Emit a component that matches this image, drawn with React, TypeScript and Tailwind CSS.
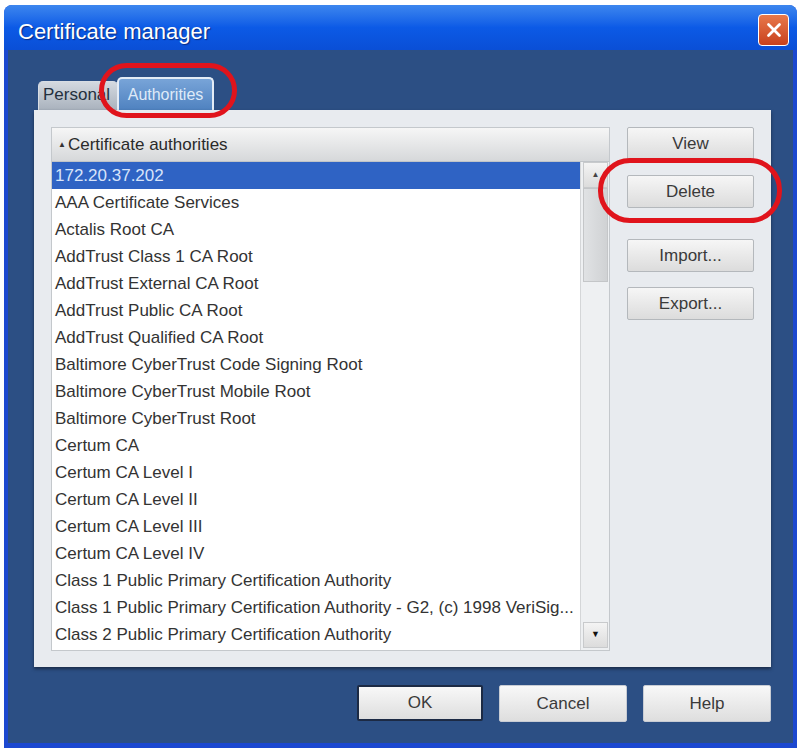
import { X } from "lucide-react";

const rows = [
  "172.20.37.202",
  "AAA Certificate Services",
  "Actalis Root CA",
  "AddTrust Class 1 CA Root",
  "AddTrust External CA Root",
  "AddTrust Public CA Root",
  "AddTrust Qualified CA Root",
  "Baltimore CyberTrust Code Signing Root",
  "Baltimore CyberTrust Mobile Root",
  "Baltimore CyberTrust Root",
  "Certum CA",
  "Certum CA Level I",
  "Certum CA Level II",
  "Certum CA Level III",
  "Certum CA Level IV",
  "Class 1 Public Primary Certification Authority",
  "Class 1 Public Primary Certification Authority - G2, (c) 1998 VeriSig...",
  "Class 2 Public Primary Certification Authority",
];

function SideButton({ label }: { label: string }) {
  return (
    <button className="h-[33px] w-[127px] shrink-0 rounded-[2px] border border-[#b4b8bc] bg-gradient-to-b from-[#f6f6f6] to-[#dcdcdc] text-[17px] text-[#3a3a3a]">
      {label}
    </button>
  );
}

function FooterButton({ label, main }: { label: string; main?: boolean }) {
  return (
    <button
      className={
        main
          ? "h-[36px] w-[126px] rounded-[2px] border-2 border-[#1c2a44] bg-gradient-to-b from-[#f8f8f8] to-[#dedede] text-[17px] text-[#3a3a3a]"
          : "h-[37px] w-[128px] rounded-[2px] border border-[#c8ccd4] bg-gradient-to-b from-[#f8f8f8] to-[#dedede] text-[17px] text-[#3a3a3a]"
      }
    >
      {label}
    </button>
  );
}

export default function App() {
  return (
    <div
      className="relative h-[751px] w-[801px] overflow-hidden bg-white pl-[4px] pt-[5px]"
      style={{ fontFamily: '"Liberation Sans", Arial, sans-serif' }}
    >
      <div className="flex h-[743px] w-[793px] flex-col overflow-hidden rounded-t-[8px] bg-[#1c48d0]">
        {/* title bar */}
        <div className="flex h-[45px] items-center justify-between bg-gradient-to-b from-[#3d86ee] via-[#0c5ae6] to-[#0a4fd6] pl-[14px] pr-[8px]">
          <span className="mt-[7px] text-[22px] text-white [text-shadow:1px_1px_1px_#0a2a80]">Certificate manager</span>
          <div className="mt-[4px] flex h-[32px] w-[31px] items-center justify-center rounded-[4px] border border-white bg-gradient-to-b from-[#e8784a] to-[#c8401c]">
            <X className="h-[22px] w-[22px] text-white" strokeWidth={3} />
          </div>
        </div>

        {/* body */}
        <div className="mx-[4px] mb-[5px] flex flex-1 flex-col bg-[#2c4f84] pl-[26px] pr-[22px]">
          <div className="flex h-[60px] items-end pl-[4px]">
            <div className="flex h-[29px] w-[80px] items-end overflow-hidden rounded-t-[5px] border border-b-0 border-[#d8dde4] bg-gradient-to-b from-[#d4d9e0] to-[#a9b2bd] pb-[3px] pl-[4px] text-[17px] text-[#24303e]">
              <span className="whitespace-nowrap">Personal</span>
            </div>
            <div className="ml-[-1px] flex h-[33px] w-[97px] items-center justify-center rounded-t-[5px] border-2 border-b-0 border-[#e4ecf6] bg-gradient-to-b from-[#78a4d8] to-[#4f82c0] text-[16px] text-[#dfeaf8]">
              Authorities
            </div>
          </div>

          <div className="flex h-[557px] gap-[17px] bg-[#e8ebef] pb-[16px] pl-[17px] pr-[17px] pt-[17px] shadow-[0_2px_3px_#1a2c48]">
            {/* list */}
            <div className="flex w-[559px] shrink-0 flex-col border border-[#c4c8cc] bg-white">
              <div className="flex h-[34px] items-center border-b border-[#c0c4c8] bg-gradient-to-b from-[#f6f6f6] to-[#d6d8da] pl-[6px] text-[17px] text-[#2a2a2a]">
                <span className="mr-[2px] text-[8px] text-[#333]">▲</span>
                Certificate authorities
              </div>
              <div className="flex flex-1">
                <div className="flex flex-1 flex-col overflow-hidden">
                  {rows.map((r, i) => (
                    <div
                      key={r}
                      className={
                        i === 0
                          ? "flex h-[27px] shrink-0 items-center whitespace-nowrap bg-[#2f63c4] pl-[3px] text-[17px] text-[#d8e4fa]"
                          : "flex h-[27px] shrink-0 items-center whitespace-nowrap pl-[3px] text-[17px] text-[#333]"
                      }
                    >
                      {r}
                    </div>
                  ))}
                </div>
                {/* scrollbar */}
                <div className="flex w-[29px] flex-col border-l border-[#d4d6d8] bg-[#eef0f2] pb-[2px] pl-[2px] pr-[1px]">
                  <div className="flex h-[26px] items-center justify-center border border-[#c8cacc] bg-gradient-to-b from-[#f4f4f4] to-[#dcdcdc] text-[8px] text-[#444]">
                    ▲
                  </div>
                  <div className="h-[94px] border border-[#c4c6c8] bg-gradient-to-r from-[#e0e2e4] to-[#d0d2d4]" />
                  <div className="flex-1" />
                  <div className="flex h-[26px] items-center justify-center border border-[#c8cacc] bg-gradient-to-b from-[#f4f4f4] to-[#dcdcdc] text-[9px] text-[#111]">
                    ▼
                  </div>
                </div>
              </div>
            </div>

            {/* side buttons */}
            <div className="flex flex-col">
              <SideButton label="View" />
              <div className="mt-[15px]">
                <SideButton label="Delete" />
              </div>
              <div className="mt-[31px]">
                <SideButton label="Import..." />
              </div>
              <div className="mt-[15px]">
                <SideButton label="Export..." />
              </div>
            </div>
          </div>

          <div className="flex justify-end gap-[16px] pt-[18px]">
            <FooterButton label="OK" main />
            <FooterButton label="Cancel" />
            <FooterButton label="Help" />
          </div>
        </div>
      </div>

      {/* red annotation marks */}
      <div className="absolute left-[99px] top-[63px] h-[55px] w-[138px] rounded-[28px] border-[5px] border-[#e0141c]" />
      <div className="absolute left-[598px] top-[158px] h-[65px] w-[184px] rounded-[32px] border-[5px] border-[#e0141c]" />
    </div>
  );
}
